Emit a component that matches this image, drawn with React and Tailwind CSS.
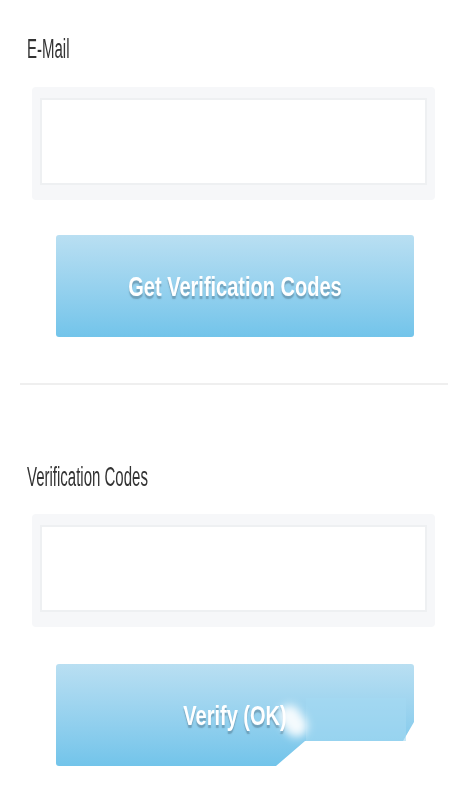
import React from "react";

const labelText =
  "inline-block origin-center scale-y-[1.78] text-[15px] leading-[20px] text-[#333333] font-['Liberation_Sans',Arial,sans-serif]";

const buttonText =
  "inline-block scale-y-[1.4] text-[20px] font-bold text-white font-['Liberation_Sans',Arial,sans-serif] [text-shadow:0_2px_1px_rgba(60,90,110,0.4)]";

function Field() {
  return (
    <div className="ml-[32px] w-[403px] h-[113px] rounded-[4px] bg-[#f6f7f9] pt-[11px] pb-[15px] px-[8px]">
      <input
        type="text"
        className="block w-full h-full bg-white border-2 border-[#eef0f2] outline-none px-3"
      />
    </div>
  );
}

export default function App() {
  return (
    <div className="w-[450px] h-[800px] bg-white overflow-hidden">
      <div className="pt-[36px] pl-[27px] h-[20px] box-content">
        <span className={labelText}>E-Mail</span>
      </div>

      <div className="mt-[31px]">
        <Field />
      </div>

      <button className="mt-[35px] ml-[56px] w-[358px] h-[102px] rounded-[3px] bg-gradient-to-b from-[#b9dff2] to-[#72c4ea] flex items-center justify-center">
        <span className={buttonText}>Get Verification Codes</span>
      </button>

      <div className="mt-[46px] ml-[20px] w-[428px] h-[2px] bg-[#efefef]" />

      <div className="mt-[79px] pl-[27px] h-[20px]">
        <span className={labelText}>Verification Codes</span>
      </div>

      <div className="mt-[30px]">
        <Field />
      </div>

      <div className="relative mt-[37px] ml-[56px] w-[358px] h-[102px]">
        <button className="w-full h-full rounded-[3px] bg-gradient-to-b from-[#b9dff2] to-[#72c4ea] flex items-center justify-center [clip-path:polygon(0_0,100%_0,100%_58px,347px_77px,249px_77px,220px_102px,0_102px)]">
          <span className={buttonText}>Verify (OK)</span>
        </button>
        <span className="absolute left-[250px] top-[34px] w-[100px] h-[43px] bg-[#a3d8f1]/60 [clip-path:polygon(0_0,100%_0,100%_100%,0_100%)]" />
        <span className="absolute left-[226px] top-[40px] w-[22px] h-[34px] rotate-[-35deg] rounded-full bg-white/90 blur-[4px]" />
      </div>
    </div>
  );
}
